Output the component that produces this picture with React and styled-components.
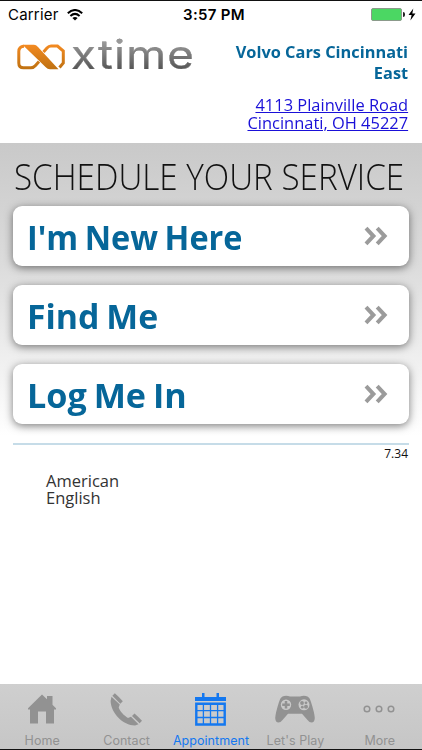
import React from 'react';
import styled, { createGlobalStyle } from 'styled-components';

const BLUE = '#066699';
const GRAY = '#929292';
const ACTIVE = '#1478f0';

const GlobalStyle = createGlobalStyle`
  * {
    box-sizing: border-box;
  }

  body {
    margin: 0;
    background: #fff;
    font-family: 'Open Sans', 'Noto Sans', sans-serif;
  }
`;

const LogoMark = () => (
  <svg width="49" height="26" viewBox="0 0 49 26">
    <defs>
      <linearGradient id="orange" x1="0" y1="0" x2="0" y2="26" gradientUnits="userSpaceOnUse">
        <stop offset="0" stopColor="#f58b22" />
        <stop offset="1" stopColor="#bd7010" />
      </linearGradient>
    </defs>
    <path
      fill="none"
      stroke="url(#orange)"
      strokeWidth="3"
      d="M7 2.2Q1.8 2.5 1.8 7.5V19Q1.8 23.8 6.5 23.8H14Q16.5 23.8 18.5 21.5L22 17.5M26.5 8L30 4Q31.8 2 34 2H40.5L46.3 7V19L42.5 23.5"
    />
    <path fill="url(#orange)" d="M5.5 .7H17Q19 .7 21 3L41.5 25.3H33Q30.5 25.3 28.5 23Z" />
  </svg>
);

const WifiIcon = () => (
  <svg width="16" height="12" viewBox="0 0 16 12">
    <g fill="none" stroke="#000" strokeWidth="2">
      <path d="M.8 4.3Q8-2.3 15.2 4.3" />
      <path d="M3.4 7Q8 2.8 12.6 7" />
    </g>
    <path d="M8 11.6L5.4 9Q8 6.8 10.6 9Z" />
  </svg>
);

const BoltIcon = () => (
  <svg width="8" height="13" viewBox="0 0 8 13">
    <path d="M5.3 .5L.5 7H3.6L2.4 12.4L7.5 5.6H4.3Z" />
  </svg>
);

const DoubleChevron = () => (
  <svg width="24" height="20" viewBox="0 0 24 20">
    <path
      fill="none"
      stroke="#9b9b9b"
      strokeWidth="4"
      d="M2 2.2L9.4 10L2 17.8M13.2 2.2L20.6 10L13.2 17.8"
    />
  </svg>
);

const HomeIcon = () => (
  <svg width="28" height="30" viewBox="0 0 28 30">
    <path
      fill="currentColor"
      d="M14 .5L19 5.3V2H24.5V10.7L28 14.2V15.5H26V29.5H18V17.5H10V29.5H2V15.5H0V14.2Z"
    />
  </svg>
);

const PhoneIcon = () => (
  <svg width="32" height="33" viewBox="0 0 32 33">
    <g fill="currentColor">
      <path d="M1.5 3.8L.6 8C1 20 13 32.5 25 32.5L28.5 31.2L21 23.8L18 25C14 22.5 10 18.5 8.7 14.5L9.8 11.5Z" />
      <path d="M4.8 .3L2.4 2.7L10.3 10.7L12.8 8.3Q8.5 3.5 4.8 .3Z" />
      <path d="M24.5 20.5L22 23L29.6 30.3L32 27.8Q28.5 24 24.5 20.5Z" />
    </g>
  </svg>
);

const CalendarIcon = () => (
  <svg width="31" height="34" viewBox="0 0 31 34">
    <path fill="currentColor" d="M0 5H7V1H9.5V5H21.5V1H24V5H31V9H0Z" />
    <path
      fill="none"
      stroke="currentColor"
      strokeWidth="2.4"
      d="M1.3 11.8H29.7V32.5H1.3Z"
    />
    <path
      fill="none"
      stroke="currentColor"
      strokeWidth="1.3"
      d="M8.4 11V33M15.5 11V33M22.6 11V33M1 18.6H30M1 25.5H30"
    />
  </svg>
);

const GamepadIcon = () => (
  <svg width="40" height="28" viewBox="0 0 40 28">
    <path
      fill="currentColor"
      d="M7 1.7Q11-.3 15 1.5H25Q29-.3 33 1.7Q35 3 36 7Q39.5 18 39.8 23Q39.5 27.5 36.5 27.5Q34.5 27.5 32.5 25L27 18.8H13L7.5 25Q5.5 27.5 3.5 27.5Q.5 27.5 .2 23Q.5 18 4 7Q5 3 7 1.7Z"
    />
    <g fill="#c9c9c9">
      <circle cx="11" cy="9.8" r="5.2" />
      <circle cx="29" cy="9.8" r="5.5" />
    </g>
    <path stroke="currentColor" strokeWidth="2.5" d="M11 6V13.6M7.2 9.8H14.8" />
    <g fill="currentColor">
      <circle cx="27" cy="8" r="1.9" />
      <circle cx="31" cy="7.8" r="1.4" />
      <circle cx="27.3" cy="12.2" r="1.4" />
      <circle cx="31" cy="11.7" r="2" />
    </g>
  </svg>
);

const MoreIcon = () => (
  <svg width="32" height="8" viewBox="0 0 32 8">
    <g fill="none" stroke="currentColor" strokeWidth="1.5">
      <circle cx="4" cy="4" r="2.8" />
      <circle cx="16" cy="4" r="2.8" />
      <circle cx="28" cy="4" r="2.8" />
    </g>
  </svg>
);

const ACTIONS = [
  { label: "I'm New Here", stretch: 0.94 },
  { label: 'Find Me', stretch: 0.98 },
  { label: 'Log Me In', stretch: 0.99 },
];

const TABS = [
  { label: 'Home', icon: HomeIcon },
  { label: 'Contact', icon: PhoneIcon },
  { label: 'Appointment', icon: CalendarIcon, active: true },
  { label: "Let's Play", icon: GamepadIcon },
  { label: 'More', icon: MoreIcon },
];

const App = () => (
  <Screen>
    <GlobalStyle />
    <StatusBar>
      <Carrier>
        Carrier
        <WifiIcon />
      </Carrier>
      <Clock>3:57 PM</Clock>
      <Power>
        <Battery />
        <BatteryTip />
        <BoltIcon />
      </Power>
    </StatusBar>
    <Header>
      <Brand>
        <LogoMark />
        <BrandName>xtime</BrandName>
      </Brand>
      <Dealer>
        <DealerName>Volvo Cars Cincinnati<br />East</DealerName>
        <Address href="#">4113 Plainville Road<br />Cincinnati, OH 45227</Address>
      </Dealer>
    </Header>
    <Schedule>
      <Title>SCHEDULE YOUR SERVICE</Title>
      <Actions>
        {ACTIONS.map(({ label, stretch }) => (
          <Action key={label}>
            <ActionLabel $stretch={stretch}>{label}</ActionLabel>
            <DoubleChevron />
          </Action>
        ))}
      </Actions>
    </Schedule>
    <Footer>
      <Version>7.34</Version>
      <Language>American<br />English</Language>
    </Footer>
    <TabBar>
      {TABS.map(({ label, icon: Icon, active }) => (
        <Tab key={label} $active={active}>
          <TabIcon><Icon /></TabIcon>
          {label}
        </Tab>
      ))}
    </TabBar>
  </Screen>
);

const Screen = styled.div`
  display: flex;
  flex-direction: column;
  width: 422px;
  height: 750px;
  overflow: hidden;
  border-top: 1px solid #111;
  border-bottom: 1px solid #111;
  background: #fff;
`;

const StatusBar = styled.div`
  display: grid;
  grid-template-columns: 1fr auto 1fr;
  align-items: center;
  height: 27px;
  padding: 0 6px 0 8px;
  font-family: Inter, sans-serif;
  font-size: 15px;
  color: #000;
`;

const Carrier = styled.div`
  display: flex;
  align-items: center;
  gap: 8px;
  letter-spacing: 0.2px;
`;

const Clock = styled.div`
  padding-left: 4px;
  font-weight: 600;
  letter-spacing: 0.3px;
`;

const Power = styled.div`
  display: flex;
  align-items: center;
  justify-content: flex-end;
`;

const Battery = styled.div`
  width: 31px;
  height: 13px;
  border: 1px solid #8b9a8b;
  border-radius: 2px;
  background: #4bd763;
`;

const BatteryTip = styled.div`
  width: 2px;
  height: 5px;
  margin: 0 3px 0 1px;
  border-radius: 0 2px 2px 0;
  background: #222;
`;

const Header = styled.header`
  display: flex;
  justify-content: space-between;
  height: 115px;
  padding: 0 14px 0 17px;
`;

const Brand = styled.div`
  display: flex;
  height: 60px;
  padding-top: 16px;
`;

const BrandName = styled.span`
  margin: -13px 0 0 5px;
  font-family: Inter, sans-serif;
  font-size: 40px;
  line-height: 48px;
  letter-spacing: 1px;
  background: linear-gradient(#999 20%, #3c3c3c 85%);
  background-clip: text;
  -webkit-text-stroke: 0.2px #707070;
  color: transparent;
  transform: scaleX(1.14);
  transform-origin: left;
`;

const Dealer = styled.div`
  display: flex;
  flex-direction: column;
  align-items: flex-end;
  padding-top: 13px;
  text-align: right;
  white-space: nowrap;
`;

const DealerName = styled.div`
  font-size: 16.5px;
  font-weight: 700;
  line-height: 21px;
  color: ${BLUE};
  transform: scaleX(0.99);
  transform-origin: right;
`;

const Address = styled.a`
  margin-top: 13px;
  font-size: 17px;
  line-height: 17.5px;
  color: #1a10d8;
  text-decoration-thickness: 1px;
  transform: scaleX(0.967);
  transform-origin: right;
`;

const Schedule = styled.section`
  height: 293px;
  padding: 11px 13px 0;
  background: linear-gradient(#c9c9c9, #dcdcdc 42%, #fff);
`;

const Title = styled.h1`
  width: max-content;
  margin: 0 0 0 1px;
  font-size: 36.5px;
  font-weight: 300;
  line-height: 44px;
  white-space: nowrap;
  color: #111;
  transform: scaleX(0.91);
  transform-origin: left;
`;

const Actions = styled.div`
  display: flex;
  flex-direction: column;
  gap: 19px;
  padding-top: 8px;
`;

const Action = styled.button`
  display: flex;
  align-items: center;
  justify-content: space-between;
  height: 60px;
  padding: 0 21px 0 14px;
  border: 0;
  border-radius: 9px;
  background: #fff;
  box-shadow: 0 2px 8px rgba(0, 0, 0, 0.5);
`;

const ActionLabel = styled.span`
  padding-top: 2px;
  font-family: 'Open Sans', sans-serif;
  font-size: 34.5px;
  font-weight: 700;
  line-height: 50px;
  word-spacing: -2px;
  color: ${BLUE};
  transform: scaleX(${({ $stretch }) => $stretch});
  transform-origin: left;
`;

const Footer = styled.footer`
  flex: 1;
  margin: 7px 13px 0;
  border-top: 2px solid #c6dce8;
`;

const Version = styled.div`
  padding-right: 1px;
  font-size: 12px;
  line-height: 18px;
  text-align: right;
  color: #111;
`;

const Language = styled.div`
  padding: 9px 0 0 33px;
  font-size: 16.5px;
  line-height: 17px;
  color: #333;
`;

const TabBar = styled.nav`
  display: grid;
  grid-template-columns: repeat(5, 1fr);
  height: 65px;
  background: linear-gradient(#cfcfcf, #c6c6c6);
`;

const Tab = styled.div`
  display: flex;
  flex-direction: column;
  align-items: center;
  font-family: Inter, sans-serif;
  font-size: 12.5px;
  line-height: 16px;
  letter-spacing: 0.05px;
  white-space: nowrap;
  color: ${({ $active }) => ($active ? ACTIVE : GRAY)};
`;

const TabIcon = styled.div`
  display: flex;
  align-items: center;
  justify-content: center;
  height: 49px;
  padding: 1px 1px 0 0;
`;

export default App;
